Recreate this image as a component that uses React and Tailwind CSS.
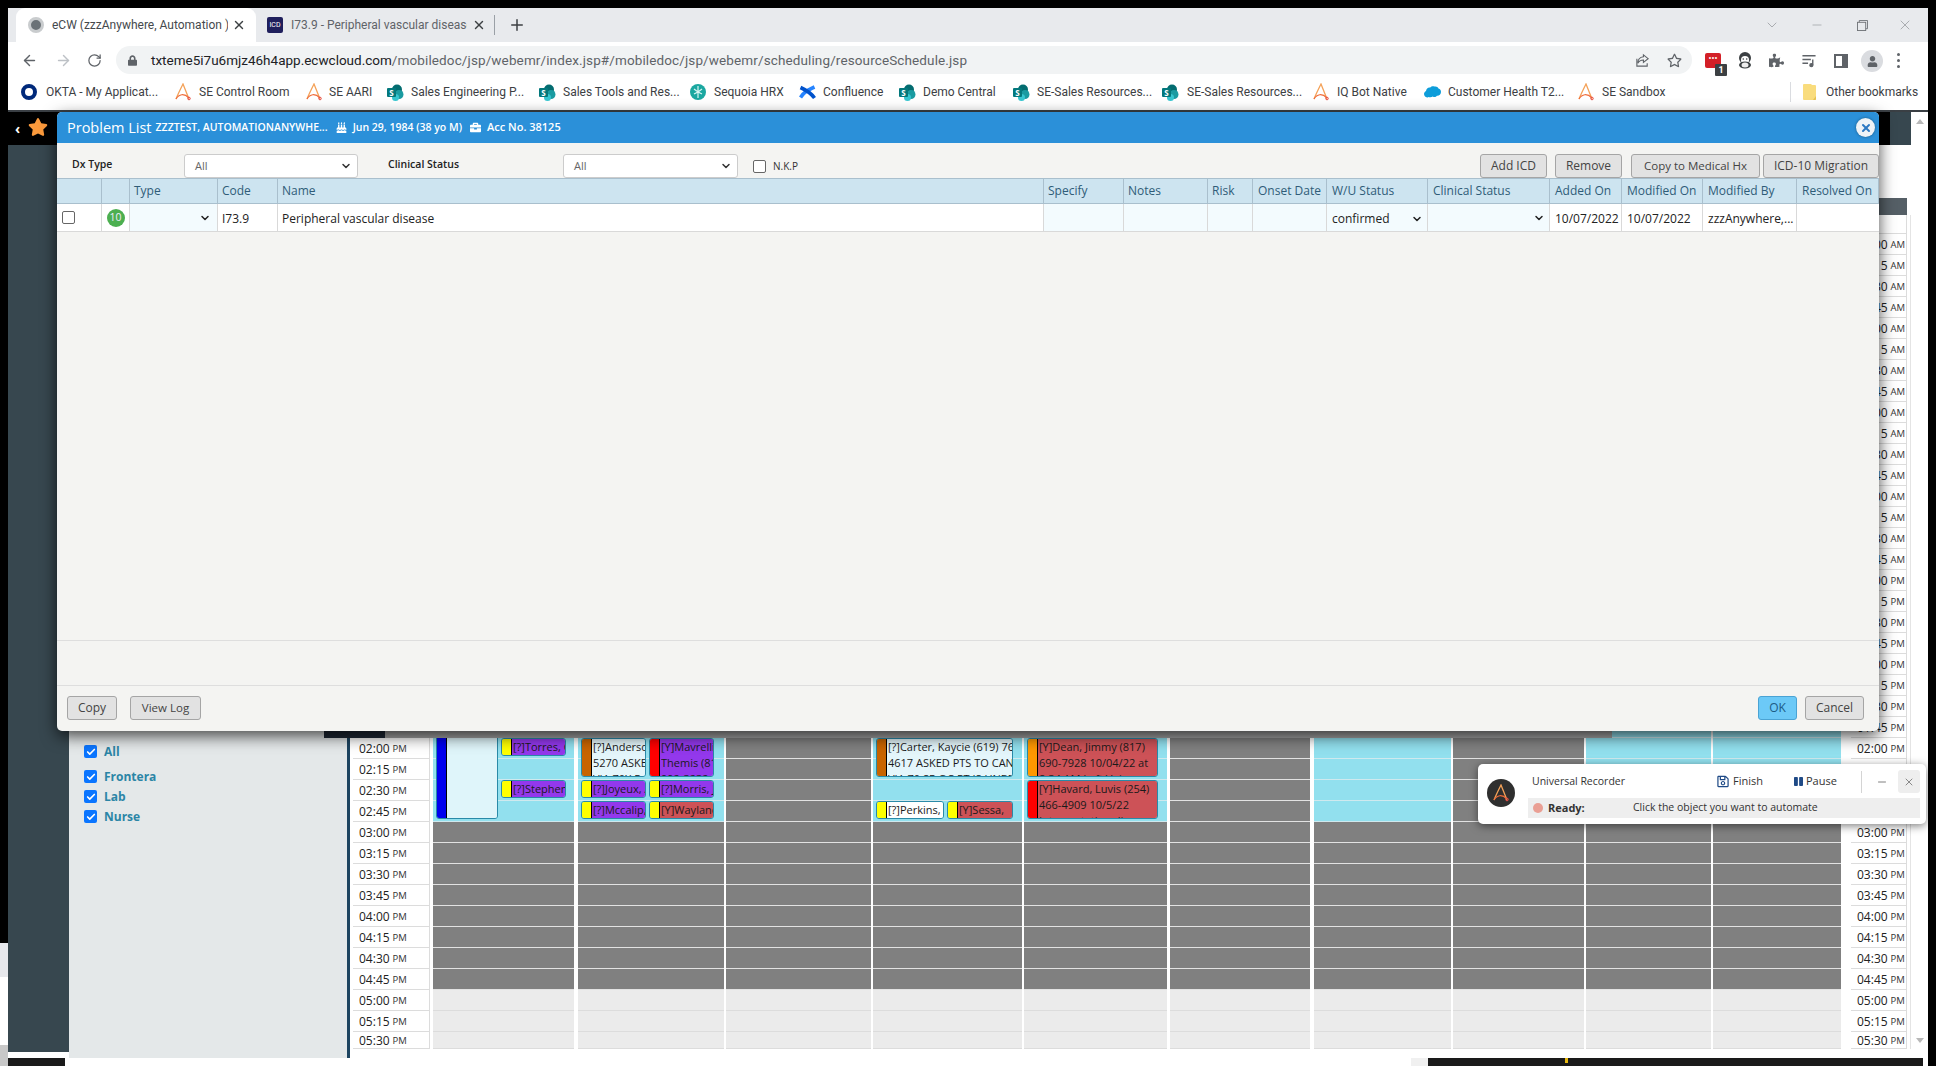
import React from 'react';
import { ArrowLeft, ArrowRight, RotateCw, X, Plus, Minus, ChevronDown, Check } from 'lucide-react';
import { FaStar, FaPuzzlePiece, FaUser, FaLock, FaRegStar, FaBirthdayCake, FaBriefcase, FaRegSave, FaPause } from 'react-icons/fa';

const ALogo = ({ className = 'w-[16px] h-[18px]' }) => (
  <svg viewBox="0 0 16 18" className={className} fill="none">
    <path d="M1 16 C3 11 6 5 8 1 C10 6 12 11 14 16" stroke="#f4a259" strokeWidth="1.3" />
    <path d="M1 16 C4 11 9 10 14 15" stroke="#ef6c3a" strokeWidth="1.2" />
    <circle cx="14" cy="15.5" r="1.3" stroke="#e8504a" strokeWidth="1" />
  </svg>
);
const SharePoint = () => (
  <svg viewBox="0 0 17 17" className="w-[17px] h-[17px]">
    <circle cx="10" cy="5.5" r="5" fill="#036c70" />
    <circle cx="12" cy="10.5" r="4.5" fill="#1a9ba1" />
    <circle cx="8.5" cy="13.5" r="3.5" fill="#37c6d0" />
    <rect x="0" y="4" width="9" height="9" rx="1" fill="#03787c" />
    <text x="4.5" y="11.5" fontSize="8" fontWeight="700" fill="#fff" textAnchor="middle" fontFamily="'Open Sans',sans-serif">S</text>
  </svg>
);
const Okta = () => <div className="w-[16px] h-[16px] rounded-full border-[4px] border-[#00297a]" />;
const Sequoia = () => (
  <svg viewBox="0 0 16 16" className="w-[16px] h-[16px]">
    <circle cx="8" cy="8" r="8" fill="#1ba7a0" />
    <path d="M8 2v12M4 5l4 3 4-3M4 10l4-2 4 2" stroke="#d8f5f2" strokeWidth="1.2" fill="none" />
  </svg>
);
const Confluence = () => (
  <svg viewBox="0 0 17 17" className="w-[17px] h-[17px]" fill="none">
    <path d="M1.5 13.5C5 8 8 6.5 15.5 3" stroke="#2684ff" strokeWidth="3.6" />
    <path d="M1.5 3.5C8 6.5 12 9 15.5 14" stroke="#0052cc" strokeWidth="3.6" />
  </svg>
);
const Salesforce = () => (
  <svg viewBox="0 0 17 12" className="w-[17px] h-[12px]">
    <path d="M4 11.5C1.5 11.5 0 9.8 0 8c0-1.5 1-2.7 2-3.1C2.4 2.5 4.3 1 6.2 1.6 7.2.4 9-.2 10.5.6c1.5-.5 3.5.3 4 2 1.6.5 2.5 2 2.5 3.4 0 2.5-2 4-4 3.8-1 1.4-3 1.7-4.200.8-1.300 1-3.300.9-4.800.3z" fill="#0d9dda" />
  </svg>
);
const Folder = () => (
  <svg viewBox="0 0 13 16" className="w-[13px] h-[16px]">
    <path d="M0 1a1 1 0 0 1 1-1h7l1 1h3a1 1 0 0 1 1 1v13a1 1 0 0 1-1 1H1a1 1 0 0 1-1-1z" fill="#f9dc7d" />
    <path d="M10 16l3-4v3a1 1 0 0 1-1 1z" fill="#e8c352" />
  </svg>
);

const bookmarks = [
  { icon: <Okta />, label: 'OKTA - My Applicat...', w: 'w-[154px]', g: 'gap-[9px]' },
  { icon: <ALogo />, label: 'SE Control Room', w: 'w-[131px]', g: 'gap-[8px]' },
  { icon: <ALogo />, label: 'SE AARI', w: 'w-[81px]', g: 'gap-[7px]' },
  { icon: <SharePoint />, label: 'Sales Engineering P...', w: 'w-[152px]', g: 'gap-[7px]' },
  { icon: <SharePoint />, label: 'Sales Tools and Res...', w: 'w-[151px]', g: 'gap-[7px]' },
  { icon: <Sequoia />, label: 'Sequoia HRX', w: 'w-[109px]', g: 'gap-[8px]' },
  { icon: <Confluence />, label: 'Confluence', w: 'w-[100px]', g: 'gap-[7px]' },
  { icon: <SharePoint />, label: 'Demo Central', w: 'w-[114px]', g: 'gap-[7px]' },
  { icon: <SharePoint />, label: 'SE-Sales Resources...', w: 'w-[149px]', g: 'gap-[7px]' },
  { icon: <SharePoint />, label: 'SE-Sales Resources...', w: 'w-[151px]', g: 'gap-[8px]' },
  { icon: <ALogo />, label: 'IQ Bot Native', w: 'w-[111px]', g: 'gap-[8px]' },
  { icon: <Salesforce />, label: 'Customer Health T2...', w: 'w-[154px]', g: 'gap-[7px]' },
  { icon: <ALogo />, label: 'SE Sandbox', w: 'w-[212px]', g: 'gap-[8px]' },
];

const Chrome = () => (
  <div className="h-[104px] flex flex-col font-['Roboto',sans-serif]">
    <div className="h-[34px] bg-[#e8eaed] flex items-end relative">
      <div className="ml-[8px] w-[240px] h-[34px] bg-white rounded-t-[9px] flex items-center pl-[12px] pr-[10px] shrink-0">
        <div className="w-[16px] h-[16px] rounded-full bg-[#6b7277] border-[3px] border-[#c9ccce] shrink-0" />
        <span className="ml-[8px] text-[12px] text-[#45494d] whitespace-nowrap overflow-hidden w-[176px]">eCW (zzzAnywhere, Automation )</span>
        <X className="w-[14px] h-[14px] ml-auto text-[#3c4043]" strokeWidth={2.4} />
      </div>
      <div className="w-[300px] h-[34px] flex items-center pl-[11px] shrink-0">
        <div className="w-[16px] h-[16px] bg-[#1f1f5c] rounded-[2px] text-[7px] text-white flex items-center justify-center shrink-0">ICD</div>
        <span className="ml-[8px] text-[12px] text-[#5f6368] whitespace-nowrap overflow-hidden w-[176px] shrink-0">I73.9 - Peripheral vascular disease</span>
        <X className="w-[14px] h-[14px] ml-[5px] text-[#3c4043] shrink-0" strokeWidth={2.4} />
        <div className="w-px h-[20px] bg-[#9aa0a6] ml-[8px] shrink-0" />
        <Plus className="w-[18px] h-[18px] ml-[13px] text-[#3c4043] shrink-0" strokeWidth={2} />
      </div>
      <div className="ml-auto h-[34px] flex items-center text-[#8a8d91] pr-[15px]">
        <ChevronDown className="w-[16px] h-[16px]" strokeWidth={1} />
        <Minus className="w-[14px] h-[14px] ml-[30px]" strokeWidth={1} />
        <svg viewBox="0 0 12 12" className="w-[11px] h-[11px] ml-[33px]" fill="none" stroke="#6f7276"><rect x=".5" y="2.500" width="9" height="9" /><path d="M2.500 2.500v-2h9v9h-2" /></svg>
        <X className="w-[16px] h-[16px] ml-[29px]" strokeWidth={1} />
      </div>
    </div>
    <div className="h-[32px] bg-white flex items-end relative">
      <ArrowLeft className="w-[17px] h-[17px] ml-[13px] mb-[5px] text-[#5f6368]" strokeWidth={2} />
      <ArrowRight className="w-[17px] h-[17px] ml-[17px] mb-[5px] text-[#bdc1c6]" strokeWidth={2} />
      <RotateCw className="w-[15px] h-[15px] ml-[15px] mb-[6px] text-[#5f6368]" strokeWidth={2} />
      <div className="ml-[14px] w-[1576px] h-[28px] rounded-full bg-[#f1f3f4] flex items-center pl-[12px] pr-[10px]">
        <FaLock className="w-[9px] h-[11px] text-[#5f6368]" />
        <span className="ml-[14px] text-[13.5px] text-[#202124] whitespace-nowrap">txteme5i7u6mjz46h4app.ecwcloud.com<span className="text-[#5f6368] tracking-[0.12px]">/mobiledoc/jsp/webemr/index.jsp#/mobiledoc/jsp/webemr/scheduling/resourceSchedule.jsp</span></span>
        <svg viewBox="0 0 16 16" className="w-[15px] h-[15px] ml-auto" fill="none" stroke="#5f6368" strokeWidth="1.2"><path d="M9 2l5 4-5 4V7.500C6 7.500 4 9 3 11c0-4 2-6.500 6-7z" /><path d="M2 6v8h11v-3" /></svg>
        <FaRegStar className="w-[15px] h-[15px] ml-[17px] text-[#5f6368]" />
      </div>
      <div className="mb-[6px] ml-[13px] relative w-[16px] h-[15px] bg-[#d32027] rounded-[2px] text-white text-[9px] leading-[10px] text-center">
        •••
        <div className="absolute left-[10px] top-[11px] w-[12px] h-[12px] bg-[#3c4043] rounded-[1px] text-[9px] font-bold leading-[12px]">1</div>
      </div>
      <svg viewBox="0 0 16 18" className="w-[16px] h-[18px] ml-[16px] mb-[5px]"><circle cx="8" cy="7" r="6" fill="#3c4043" /><circle cx="8" cy="9" r="4" fill="#fff" /><circle cx="6.300" cy="8" r=".8" fill="#3c4043" /><circle cx="9.700" cy="8" r=".8" fill="#3c4043" /><ellipse cx="8" cy="14" rx="6" ry="3.500" fill="#3c4043" /><ellipse cx="8" cy="14" rx="3.500" ry="2.500" fill="#eee" /></svg>
      <FaPuzzlePiece className="w-[15px] h-[15px] ml-[16px] mb-[6px] text-[#5f6368]" />
      <svg viewBox="0 0 16 16" className="w-[16px] h-[15px] ml-[17px] mb-[6px]" fill="none" stroke="#5f6368" strokeWidth="1.500"><path d="M1 3h14M1 7h9M1 11h6" /><path d="M12 7v6" /><circle cx="10.500" cy="13" r="1.500" fill="#5f6368" /></svg>
      <div className="w-[14px] h-[14px] ml-[17px] mb-[6px] border-[2px] border-[#5f6368] border-r-[6px]" />
      <div className="w-[22px] h-[22px] ml-[13px] mb-[2px] rounded-full bg-[#dadce0] flex items-center justify-center"><FaUser className="w-[11px] h-[11px] text-[#5f6368]" /></div>
      <div className="w-[3px] h-[15px] ml-[14px] mb-[6px] flex flex-col justify-between">
        <div className="w-[3px] h-[3px] rounded-full bg-[#5f6368]" /><div className="w-[3px] h-[3px] rounded-full bg-[#5f6368]" /><div className="w-[3px] h-[3px] rounded-full bg-[#5f6368]" />
      </div>
    </div>
    <div className="h-[36px] bg-white flex items-center pl-[13px] text-[12px] text-[#3c4043]">
      {bookmarks.map((b, i) => (
        <div key={i} className={`${b.w} ${b.g} flex items-center shrink-0 whitespace-nowrap`}>{b.icon}<span>{b.label}</span></div>
      ))}
      <div className="w-px h-[20px] bg-[#dadce0]" />
      <div className="ml-[12px] flex items-center gap-[10px] whitespace-nowrap"><Folder /><span>Other bookmarks</span></div>
    </div>
    <div className="h-[2px] bg-[#3a3f44]" />
  </div>
);

const cellColor = { c: 'bg-[#92e0ee] border-[#cfe9ee]', g: 'bg-[#808080] border-[#e2e2e2]' };
const cols = [
  { k: 'c', cl: 'w-[141px]' }, { k: 'c', cl: 'w-[146px] ml-[4px]' }, { k: 'g', cl: 'w-[145px] ml-[2px]' },
  { k: 'c', cl: 'w-[149px] ml-[2px]' }, { k: 'c', cl: 'w-[143px] ml-[2px]' }, { k: 'g', cl: 'w-[140px] ml-[3px]' },
  { k: 'c', cl: 'w-[137px] ml-[4px]' }, { k: 'g', cl: 'w-[131px] ml-[2px]' }, { k: 'c', cl: 'w-[125px] ml-[2px]' },
  { k: 'c', cl: 'w-[128px] ml-[2px]' },
];
const rowH = (i) => (i === 0 ? 'h-[19px]' : i === 39 ? 'h-[17px]' : 'h-[21px]');
const rows = Array.from({ length: 40 }, (_, i) => i);
const timeOf = (i) => {
  if (i === 0) return null;
  const m = 8 * 60 + (i - 1) * 15;
  const h24 = Math.floor(m / 60);
  const h = h24 > 12 ? h24 - 12 : h24;
  return { t: `${String(h).padStart(2, '0')}:${String(m % 60).padStart(2, '0')}`, p: h24 >= 12 ? 'PM' : 'AM' };
};

const Appt = ({ pos, bar, body, lines }) => (
  <div className={`absolute ${pos} flex overflow-hidden rounded-[3px] border border-[#2a8aa8] z-10 font-['Open_Sans',sans-serif] text-[11px] leading-[16px] text-[#1a1a1a]`}>
    <div className={`w-[10px] shrink-0 ${bar} border-r border-black`} />
    <div className={`flex-1 min-w-0 pl-[1px] ${body}`}>
      {lines.map((l, i) => <div key={i} className="whitespace-nowrap overflow-hidden">{l}</div>)}
    </div>
  </div>
);
const P = 'bg-[#9338ec]', R = 'bg-[#cd5257]', W = 'bg-[#e4f6fb]', Y = 'bg-[#ffff00]';
const appts = {
  0: [
    { pos: 'left-[3px] top-[480px] w-[62px] h-[124px]', bar: 'bg-[#0000ee]', body: 'bg-[#dff5fa]', lines: [] },
    { pos: 'left-[68px] top-[523px] w-[65px] h-[18px]', bar: Y, body: P, lines: ['[?]Torres, C'] },
    { pos: 'left-[68px] top-[565px] w-[65px] h-[18px]', bar: Y, body: P, lines: ['[?]Stephen'] },
  ],
  1: [
    { pos: 'left-[3px] top-[523px] w-[65px] h-[39px]', bar: 'bg-[#c86400]', body: W, lines: ['[?]Anderson', '5270 ASKED', 'VIA 70X P'] },
    { pos: 'left-[71px] top-[523px] w-[65px] h-[39px]', bar: 'bg-[#ff0000]', body: P, lines: ['[Y]Mavrelli,', 'Themis (817)', '992-3232'] },
    { pos: 'left-[3px] top-[565px] w-[65px] h-[18px]', bar: Y, body: P, lines: ['[?]Joyeux, A'] },
    { pos: 'left-[71px] top-[565px] w-[65px] h-[18px]', bar: Y, body: P, lines: ['[?]Morris, J'] },
    { pos: 'left-[3px] top-[586px] w-[65px] h-[18px]', bar: Y, body: P, lines: ['[?]Mccalip, J'] },
    { pos: 'left-[71px] top-[586px] w-[65px] h-[18px]', bar: Y, body: R, lines: ['[Y]Wayland'] },
  ],
  3: [
    { pos: 'left-[3px] top-[523px] w-[137px] h-[39px]', bar: 'bg-[#c86400]', body: W, lines: ['[?]Carter, Kaycie (619) 76', '4617 ASKED PTS TO CANCEL', 'VIA 70 SR OC PT IS UNBE'] },
    { pos: 'left-[3px] top-[586px] w-[68px] h-[18px]', bar: Y, body: 'bg-white', lines: ['[?]Perkins,'] },
    { pos: 'left-[74px] top-[586px] w-[66px] h-[18px]', bar: Y, body: R, lines: ['[Y]Sessa,'] },
  ],
  4: [
    { pos: 'left-[3px] top-[523px] w-[131px] h-[39px]', bar: 'bg-[#ff9800]', body: R, lines: ['[Y]Dean, Jimmy (817)', '690-7928 10/04/22 at', '8:34 AM Left Voi'] },
    { pos: 'left-[3px] top-[565px] w-[131px] h-[39px]', bar: 'bg-[#ff0000]', body: R, lines: ['[Y]Havard, Luvis (254)', '466-4909 10/5/22', 'Interpretation di'] },
  ],
};

const TimeCol = ({ cl }) => (
  <div className={`${cl} shrink-0 bg-white border-r border-[#dcdcdc] font-['Open_Sans',sans-serif]`}>
    {rows.map((i) => {
      const t = timeOf(i);
      return (
        <div key={i} className={`${rowH(i)} border-b border-[#dcdcdc] pl-[6px] pt-[2px] flex items-center overflow-hidden whitespace-nowrap text-[#222]`}>
          {t && <><span className="text-[12px]">{t.t}</span><span className="text-[9.5px] ml-[3px] text-[#333]">{t.p}</span></>}
        </div>
      );
    })}
  </div>
);

const Schedule = () => (
  <div className="w-[1578px] shrink-0 flex flex-col bg-white">
    <div className="h-[53px]" />
    <div className="h-[17px] ml-[3px] w-[1554px] bg-[#555f66]" />
    <div className="h-[834px] flex">
      <TimeCol cl="ml-[3px] w-[77px]" />
      <div className="flex ml-[3px]">
        {cols.map((c, ci) => (
          <div key={ci} className={`${c.cl} shrink-0 relative`}>
            {rows.map((i) => {
              const color = i >= 37 ? 'bg-[#ebebeb] border-[#dcdcdc]' : i >= 29 ? cellColor.g : cellColor[c.k];
              return <div key={i} className={`${rowH(i)} ${color} border-b`} />;
            })}
            {(appts[ci] || []).map((a, j) => <Appt key={j} {...a} />)}
          </div>
        ))}
      </div>
      <TimeCol cl="ml-[10px] w-[56px]" />
      <div className="ml-[3px] w-[18px] border-l border-[#e4e4e4] flex flex-col items-center justify-end pb-[6px]">
        <div className="w-0 h-0 border-x-[4px] border-x-transparent border-t-[5px] border-t-[#b8b8b8]" />
      </div>
    </div>
    <div className="h-[17px] flex items-end">
      <div className="ml-[1061px] w-[17px] h-[8px] bg-[#f0f0f0]" />
      <div className="w-[495px] h-[8px] bg-[#1a1a1a] relative"><div className="absolute left-[137px] top-0 w-[3px] h-[5px] bg-[#e8b90e]" /></div>
    </div>
  </div>
);

const CheckItem = ({ label, cl }) => (
  <div className={`flex items-center ${cl}`}>
    <div className="w-[13px] h-[13px] rounded-[2px] bg-[#0a75ff] flex items-center justify-center"><Check className="w-[10px] h-[10px] text-white" strokeWidth={4} /></div>
    <span className="ml-[7px] text-[12px] font-bold text-[#2b85a6] font-['Open_Sans',sans-serif] leading-[13px]">{label}</span>
  </div>
);

const Page = () => (
  <div className="h-[954px] flex flex-col bg-white">
    <div className="h-[33px] flex shrink-0">
      <div className="w-[1882px] bg-black flex items-center text-white">
        <span className="ml-[7px] text-[14px] leading-none font-bold font-['Open_Sans',sans-serif]">‹</span>
        <FaStar className="ml-[8px] w-[20px] h-[20px] text-[#fb9a3c] -mt-[4px]" />
      </div>
      <div className="w-[21px] bg-[#37474f]" />
      <div className="w-[17px] flex justify-center pt-[7px]">
        <div className="w-0 h-0 border-x-[4px] border-x-transparent border-b-[5px] border-b-[#b8b8b8]" />
      </div>
    </div>
    <div className="flex flex-1">
      <div className="w-[61px] shrink-0 flex flex-col">
        <div className="h-[907px] bg-[#37474f]" />
        <div className="h-[6px] bg-white" />
        <div className="h-[8px] w-[57px] bg-[#1a1a1a]" />
      </div>
      <div className="w-[278px] shrink-0 h-[913px] bg-[#e4e8e9] pt-[600px] pl-[15px]">
        <CheckItem label="All" cl="h-[13px]" />
        <CheckItem label="Frontera" cl="h-[13px] mt-[12px]" />
        <CheckItem label="Lab" cl="h-[13px] mt-[7px]" />
        <CheckItem label="Nurse" cl="h-[13px] mt-[7px]" />
      </div>
      <div className="w-[3px] shrink-0 h-[913px] bg-[#1d4460]" />
      <Schedule />
    </div>
  </div>
);

const Btn = ({ children, cl = '' }) => (
  <button className={`h-[24px] rounded-[3px] border border-[#a5a5a5] bg-[#e2e2e2] text-[12px] text-[#444] flex items-center justify-center whitespace-nowrap ${cl}`}>{children}</button>
);
const Sel = ({ cl }) => (
  <div className={`h-[24px] rounded-[3px] border border-[#ccc] bg-white flex items-center pl-[10px] pr-[5px] text-[11px] text-[#666] ${cl}`}>
    <span>All</span><ChevronDown className="w-[12px] h-[12px] ml-auto text-[#333]" strokeWidth={3} />
  </div>
);
const Box = () => <div className="w-[13px] h-[13px] rounded-[2px] border border-[#666] bg-white" />;

const headers = ['', '', 'Type', 'Code', 'Name', 'Specify', 'Notes', 'Risk', 'Onset Date', 'W/U Status', 'Clinical Status', 'Added On', 'Modified On', 'Modified By', 'Resolved On'];
const gridCols = 'grid-cols-[45px_28px_88px_60px_766px_80px_84px_45px_74px_101px_122px_72px_81px_94px_82px]';
const Blue = 'bg-[#f3fbfe]';

const Modal = () => (
  <div className="absolute left-[57px] top-[112px] w-[1822px] h-[619px] bg-[#f4f4f2] rounded-[5px] shadow-[0_5px_16px_rgba(0,0,0,0.7)] flex flex-col font-['Open_Sans',sans-serif] z-20">
    <div className="h-[31px] bg-[#2b90d9] rounded-t-[5px] flex items-center pl-[10px] text-white whitespace-nowrap shrink-0">
      <span className="text-[14.5px]">Problem List</span>
      <span className="ml-[4px] text-[10.5px] font-semibold">ZZZTEST, AUTOMATIONANYWHE...</span>
      <FaBirthdayCake className="ml-[8px] w-[11px] h-[11px]" />
      <span className="ml-[6px] text-[10.5px] font-semibold">Jun 29, 1984 (38 yo M)</span>
      <FaBriefcase className="ml-[8px] w-[11px] h-[11px]" />
      <span className="ml-[6px] text-[11px] font-semibold">Acc No. 38125</span>
      <div className="ml-auto mr-[4px] w-[19px] h-[19px] rounded-full bg-[#eef3f7] shadow-[0_0_3px_rgba(0,0,0,0.4)] flex items-center justify-center">
        <X className="w-[12px] h-[12px] text-[#2b78c2]" strokeWidth={4} />
      </div>
    </div>
    <div className="h-[35px] flex items-start pt-[11px] shrink-0">
      <span className="ml-[15px] text-[10.5px] font-semibold text-[#222] w-[112px] leading-[20px]">Dx Type</span>
      <Sel cl="w-[174px]" />
      <span className="ml-[30px] text-[10.5px] font-semibold text-[#222] w-[175px] leading-[20px]">Clinical Status</span>
      <Sel cl="w-[175px]" />
      <div className="ml-[15px] mt-[6px]"><Box /></div>
      <span className="ml-[7px] mt-[6px] text-[10px] text-[#333] leading-[13px]">N.K.P</span>
      <div className="ml-auto flex">
        <Btn cl="w-[67px]">Add ICD</Btn>
        <Btn cl="w-[67px] ml-[8px]">Remove</Btn>
        <Btn cl="w-[129px] ml-[9px] !text-[11.5px]">Copy to Medical Hx</Btn>
        <Btn cl="w-[116px] ml-[3px]">ICD-10 Migration</Btn>
      </div>
    </div>
    <div className={`grid ${gridCols} h-[26px] shrink-0 bg-[#cde4f0] border-y border-[#a9bfcd] text-[12px] font-medium text-[#2f5c78]`}>
      {headers.map((h, i) => <div key={i} className={`border-r border-[#a9bfcd] flex items-center whitespace-nowrap overflow-hidden ${i >= 8 ? 'pl-[5px]' : 'pl-[4px]'}`}>{h}</div>)}
    </div>
    <div className={`grid ${gridCols} h-[28px] shrink-0 bg-white border-b border-[#d9d9d9] text-[12px] text-[#222]`}>
      <div className="border-r border-[#d9d9d9] pl-[5px] flex items-center"><Box /></div>
      <div className="border-r border-[#d9d9d9] flex items-center justify-center"><div className="w-[18px] h-[18px] rounded-full bg-[#4caf50] text-[#eef] text-[10.5px] flex items-center justify-center">10</div></div>
      <div className={`border-r border-[#d9d9d9] ${Blue} flex items-center justify-end pr-[6px]`}><ChevronDown className="w-[12px] h-[12px] text-[#222]" strokeWidth={3} /></div>
      <div className="border-r border-[#d9d9d9] pl-[4px] pt-[2px] flex items-center">I73.9</div>
      <div className="border-r border-[#d9d9d9] pl-[4px] pt-[2px] flex items-center">Peripheral vascular disease</div>
      <div className={`border-r border-[#d9d9d9] ${Blue}`} />
      <div className={`border-r border-[#d9d9d9] ${Blue}`} />
      <div className={`border-r border-[#d9d9d9] ${Blue}`} />
      <div className={`border-r border-[#d9d9d9] ${Blue}`} />
      <div className={`border-r border-[#d9d9d9] ${Blue} pl-[5px] pr-[4px] pt-[2px] flex items-center`}><span>confirmed</span><ChevronDown className="w-[12px] h-[12px] ml-auto text-[#222]" strokeWidth={3} /></div>
      <div className={`border-r border-[#d9d9d9] ${Blue} flex items-center justify-end pr-[4px]`}><ChevronDown className="w-[12px] h-[12px] text-[#222]" strokeWidth={3} /></div>
      <div className="border-r border-[#d9d9d9] pl-[5px] pt-[2px] flex items-center">10/07/2022</div>
      <div className="border-r border-[#d9d9d9] pl-[5px] pt-[2px] flex items-center">10/07/2022</div>
      <div className="border-r border-[#d9d9d9] pl-[5px] pt-[2px] flex items-center">zzzAnywhere,...</div>
      <div />
    </div>
    <div className="h-[409px] shrink-0 border-b border-[#dedede]" />
    <div className="h-[45px] shrink-0 border-b border-[#dedede]" />
    <div className="flex-1 flex items-start pt-[10px] pl-[10px] pr-[15px]">
      <Btn cl="w-[50px]">Copy</Btn>
      <Btn cl="w-[71px] ml-[13px] !text-[11.5px]">View Log</Btn>
      <Btn cl="w-[39px] ml-auto !bg-[#6cc9f7] !border-[#4aa3d4] !text-[#1c5c86]">OK</Btn>
      <Btn cl="w-[59px] ml-[8px]">Cancel</Btn>
    </div>
  </div>
);

const Recorder = () => (
  <div className="absolute left-[1478px] top-[764px] w-[448px] h-[60px] bg-white rounded-[5px] shadow-[0_2px_8px_rgba(0,0,0,0.5)] flex font-['Open_Sans',sans-serif] z-30">
    <div className="w-[50px] shrink-0 pl-[9px] pt-[15px]">
      <div className="w-[28px] h-[28px] rounded-full bg-[#2f2f2f] flex items-center justify-center"><ALogo className="w-[16px] h-[18px]" /></div>
    </div>
    <div className="w-[392px] pt-[6px]">
      <div className="h-[23px] flex items-center pl-[4px] text-[#333]">
        <span className="text-[10.5px] w-[185px] shrink-0 whitespace-nowrap">Universal Recorder</span>
        <FaRegSave className="w-[12px] h-[13px] text-[#1f4a86] shrink-0" />
        <span className="ml-[4px] text-[11px] w-[30px] shrink-0">Finish</span>
        <FaPause className="ml-[31px] w-[9px] h-[11px] text-[#1f4a86] shrink-0" />
        <span className="ml-[3px] text-[11px] w-[31px] shrink-0">Pause</span>
        <div className="ml-[24px] w-px h-[22px] bg-[#d4d4d4] shrink-0" />
        <Minus className="ml-[14px] w-[12px] h-[12px] text-[#555] shrink-0" strokeWidth={1.5} />
        <div className="ml-[10px] w-[22px] h-[23px] rounded-[3px] bg-[#eeeeee] flex items-center justify-center shrink-0"><X className="w-[12px] h-[12px] text-[#666]" strokeWidth={1.5} /></div>
      </div>
      <div className="mt-[5px] h-[20px] bg-[#eeeeee] flex items-center pl-[5px] text-[10.5px] text-[#333]">
        <div className="w-[10px] h-[10px] rounded-full bg-[#ea9f94]" />
        <span className="ml-[5px] font-bold w-[85px] text-[11px]">Ready:</span>
        <span>Click the object you want to automate</span>
      </div>
    </div>
  </div>
);

export default function App() {
  return (
    <div className="relative w-[1936px] h-[1066px] overflow-hidden bg-black flex flex-col">
      <div className="h-[8px] shrink-0 bg-black" />
      <div className="flex h-[1058px]">
        <div className="w-[8px] shrink-0 flex flex-col">
          <div className="h-[935px] bg-black" />
          <div className="h-[34px] bg-[#e6e8ec]" />
          <div className="h-[68px] bg-white" />
          <div className="h-[21px] bg-[#c8c8c8]" />
        </div>
        <div className="w-[1920px] shrink-0">
          <Chrome />
          <Page />
        </div>
      </div>
      <div className="absolute left-[324px] top-[720px] w-[1288px] h-[18px] bg-[#a6a6a6] z-10"><div className="w-[61px] h-full bg-[#1f2937]" /></div>
      <Modal />
      <Recorder />
    </div>
  );
}
